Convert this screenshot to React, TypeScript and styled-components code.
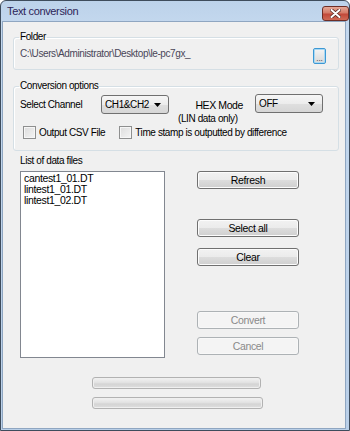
import styled, { createGlobalStyle } from "styled-components";

const GlobalStyle = createGlobalStyle`
  html, body {
    margin: 0;
    padding: 0;
    background: #ffffff;
  }
  body {
    font-family: "Liberation Sans", Arial, sans-serif;
    font-size: 10px;
    letter-spacing: -0.4px;
    color: #000;
  }
`;

const Window = styled.div`
  width: 350px;
  height: 431px;
  box-sizing: border-box;
  display: flex;
  flex-direction: column;
  border: 1px solid #3e4c5c;
  border-radius: 6px 6px 0 0;
  background: linear-gradient(#bcd2ea, #c4d8ee 24px, #b9cfe8);
  padding: 0 3px 1px 1px;
`;

const TitleBar = styled.div`
  height: 20px;
  display: flex;
  align-items: center;
  justify-content: space-between;
  padding-left: 5px;
`;

const Title = styled.span`
  font-size: 11px;
  letter-spacing: -0.35px;
  color: #2c2458;
`;

const CloseButton = styled.div`
  width: 27px;
  height: 15px;
  margin-top: 5px;
  margin-right: -3px;
  box-sizing: border-box;
  border: 1px solid #6e2e26;
  border-radius: 3px;
  background: linear-gradient(#e5a897, #d47b68 45%, #c2493a 55%, #cf6a55);
  display: flex;
  align-items: center;
  justify-content: center;
`;

const Client = styled.div`
  flex: 1;
  background: #f0f0f0;
  border: 1px solid #8fa6c1;
  padding: 9px 6px 0 10px;
  display: flex;
  flex-direction: column;
`;

const Group = styled.fieldset<{ $gap?: number }>`
  margin: ${(p) => p.$gap ?? 0}px 0 0 0;
  border: 1px solid #d5dfe5;
  border-radius: 3px;
  box-shadow: inset 1px 1px 0 #ffffff;
  min-width: 0;
`;

const FolderGroup = styled(Group)`
  padding: 5px 12px 5px 6px;
`;

const OptionsGroup = styled(Group)`
  padding: 0 6px 11px 6px;
`;

const Legend = styled.legend`
  padding: 0 1px;
  margin-left: -1px;
  line-height: 12px;
  font-size: 10px;
`;

const FolderRow = styled.div`
  display: flex;
  align-items: flex-start;
  justify-content: space-between;
  height: 16px;
`;

const PathText = styled.span`
  line-height: 12px;
  color: #4a4658;
`;

const BrowseButton = styled.div`
  width: 13px;
  height: 16px;
  box-sizing: border-box;
  border: 1px solid #3c98d4;
  border-radius: 2px;
  box-shadow: 0 0 0 1px #a9d8f3 inset;
  background: linear-gradient(#f4f4f4, #e6e6e6 50%, #d8d8d8);
  font-size: 8px;
  letter-spacing: 0;
  line-height: 8px;
  text-align: center;
  padding-top: 6px;
  color: #222;
`;

const OptionsRow = styled.div`
  display: flex;
  align-items: flex-start;
  height: 34px;
`;

const ChannelLabel = styled.span`
  width: 81px;
  margin-top: 3px;
  line-height: 19px;
`;

const Combo = styled.div<{ $top: number; $left?: number }>`
  width: 68px;
  height: 19px;
  box-sizing: border-box;
  margin-top: ${(p) => p.$top}px;
  margin-left: ${(p) => p.$left ?? 0}px;
  border: 1px solid #707070;
  border-radius: 3px;
  background: linear-gradient(#f6f6f6, #ececec 50%, #dfdfdf 51%, #d6d6d6);
  display: flex;
  align-items: center;
  justify-content: space-between;
  padding: 0 7px 0 3px;
  font-size: 10px;
  letter-spacing: -0.4px;
`;

const HexBlock = styled.div`
  width: 65px;
  margin: 6px 0 0 9px;
  display: flex;
  flex-direction: column;
  line-height: 14px;
  white-space: nowrap;
`;

const HexMode = styled.span`
  text-align: right;
  font-size: 10.5px;
`;

const CheckRow = styled.div`
  display: flex;
  align-items: center;
  height: 13px;
`;

const CheckItem = styled.label<{ $left: number }>`
  display: flex;
  align-items: center;
  gap: 3px;
  margin-left: ${(p) => p.$left}px;
`;

const CheckBox = styled.span`
  width: 13px;
  height: 13px;
  box-sizing: border-box;
  border: 1px solid #8e8f8f;
  background: linear-gradient(135deg, #dcdcdc, #f4f4f4);
  box-shadow: inset 0 0 0 1px #f6f6f6;
`;

const FileSection = styled.div`
  margin: 4px 0 0 7px;
  display: flex;
  flex-direction: column;
`;

const SectionLabel = styled.span`
  line-height: 12px;
`;

const FileArea = styled.div`
  display: flex;
  gap: 32px;
  margin-top: 4px;
`;

const ListBox = styled.div`
  width: 145px;
  height: 187px;
  box-sizing: border-box;
  border: 1px solid #828790;
  background: #ffffff;
  padding: 1px 3px;
  display: flex;
  flex-direction: column;
  font-size: 10.5px;
  letter-spacing: -0.35px;
`;

const ListItem = styled.span`
  line-height: 11px;
`;

const ButtonColumn = styled.div`
  display: flex;
  flex-direction: column;
`;

const Button = styled.div<{ $gap: number; $disabled?: boolean }>`
  width: 102px;
  height: 18px;
  box-sizing: border-box;
  margin-top: ${(p) => p.$gap}px;
  border: 1px solid ${(p) => (p.$disabled ? "#adb2b5" : "#707070")};
  border-radius: 3px;
  background: ${(p) =>
    p.$disabled
      ? "#f4f4f4"
      : "linear-gradient(#f2f2f2, #ebebeb 50%, #dddddd 51%, #cfcfcf)"};
  box-shadow: inset 0 0 0 1px ${(p) => (p.$disabled ? "#f8f8f8" : "#fcfcfc")};
  color: ${(p) => (p.$disabled ? "#8a8a8a" : "#000")};
  display: flex;
  align-items: center;
  justify-content: center;
  font-size: 10.5px;
  letter-spacing: -0.35px;
`;

const ProgressStack = styled.div`
  margin: 19px 0 0 79px;
  display: flex;
  flex-direction: column;
  gap: 8px;
`;

const Progress = styled.div<{ $width: number }>`
  width: ${(p) => p.$width}px;
  height: 12px;
  box-sizing: border-box;
  border: 1px solid #b2b2b2;
  border-radius: 3px;
  background: linear-gradient(#f2f2f2, #e2e2e2 45%, #d4d4d4 60%, #dedede);
  box-shadow: inset 0 0 0 1px #efefef;
`;

function Arrow() {
  return (
    <svg width="7" height="4" viewBox="0 0 7 4">
      <path d="M0 0h7L3.5 4z" fill="#000" />
    </svg>
  );
}

function CloseGlyph() {
  return (
    <svg width="11" height="9" viewBox="0 0 11 9">
      <path d="M1.5 1l8 7M9.5 1l-8 7" stroke="#5a2a24" strokeWidth="3.6" strokeLinecap="round" />
      <path d="M1.5 1l8 7M9.5 1l-8 7" stroke="#ffffff" strokeWidth="2" strokeLinecap="round" />
    </svg>
  );
}

const files = ["cantest1_01.DT", "lintest1_01.DT", "lintest1_02.DT"];

export default function App() {
  return (
    <>
      <GlobalStyle />
      <Window>
        <TitleBar>
          <Title>Text conversion</Title>
          <CloseButton>
            <CloseGlyph />
          </CloseButton>
        </TitleBar>
        <Client>
          <FolderGroup>
            <Legend>Folder</Legend>
            <FolderRow>
              <PathText>C:\Users\Administrator\Desktop\le-pc7gx_</PathText>
              <BrowseButton>...</BrowseButton>
            </FolderRow>
          </FolderGroup>

          <OptionsGroup $gap={10}>
            <Legend>Conversion options</Legend>
            <OptionsRow>
              <ChannelLabel>Select Channel</ChannelLabel>
              <Combo $top={3}>
                <span>CH1&amp;CH2</span>
                <Arrow />
              </Combo>
              <HexBlock>
                <HexMode>HEX Mode</HexMode>
                <span>(LIN data only)</span>
              </HexBlock>
              <Combo $top={2} $left={12}>
                <span>OFF</span>
                <Arrow />
              </Combo>
            </OptionsRow>
            <CheckRow>
              <CheckItem $left={3}>
                <CheckBox />
                Output CSV File
              </CheckItem>
              <CheckItem $left={14}>
                <CheckBox />
                Time stamp is outputted by difference
              </CheckItem>
            </CheckRow>
          </OptionsGroup>

          <FileSection>
            <SectionLabel>List of data files</SectionLabel>
            <FileArea>
              <ListBox>
                {files.map((f) => (
                  <ListItem key={f}>{f}</ListItem>
                ))}
              </ListBox>
              <ButtonColumn>
                <Button $gap={0}>Refresh</Button>
                <Button $gap={30}>Select all</Button>
                <Button $gap={11}>Clear</Button>
                <Button $gap={45} $disabled>
                  Convert
                </Button>
                <Button $gap={8} $disabled>
                  Cancel
                </Button>
              </ButtonColumn>
            </FileArea>
          </FileSection>

          <ProgressStack>
            <Progress $width={169} />
            <Progress $width={171} />
          </ProgressStack>
        </Client>
      </Window>
    </>
  );
}
